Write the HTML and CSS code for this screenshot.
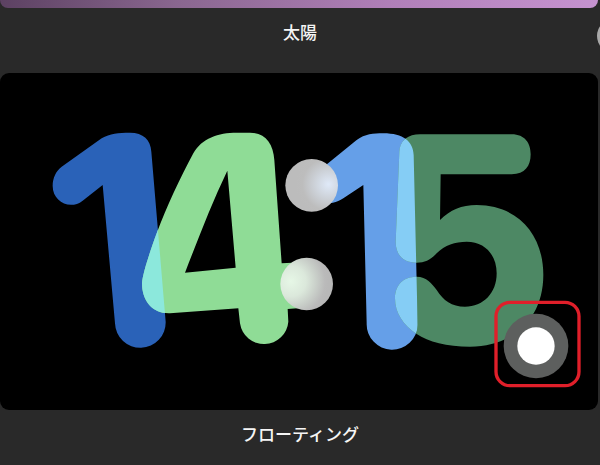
FILE: index.html
```html
<!DOCTYPE html>
<html lang="ja">
<head>
<meta charset="utf-8">
<title>フローティング</title>
<link rel="stylesheet" href="styles.css">
</head>
<body>
<div class="page">
  <div class="top-bar"></div>
  <div class="caption caption-top">太陽</div>
  <div class="side-dot"></div>
  <div class="card">
    <svg class="clock" viewBox="0 0 600 465" xmlns="http://www.w3.org/2000/svg">
      <defs>
        <path id="one-a" d="M95 170L215 85C240 70 265 68 300 68C340 68 362 90 364 125L407 635A76 76 0 0 1 255 640L218 225L158 272C120 302 68 275 68 228C68 203 78 183 95 170Z"/>
        <path id="four" fill-rule="evenodd" d="M620 68L660 68C705 68 730 100 733 150L755 460L850 455L860 590L773 597L775 635A73 73 0 0 1 630 640L625 595L420 610C365 612 336 570 336 520C338 490 360 425 380 370C410 290 450 205 490 130C515 85 565 68 620 68ZM592 182C545 280 505 385 465 488L617 473Z"/>
        <path id="one-b" d="M100 196L230 90C255 72 280 70 310 70C370 70 400 95 401 135L413 645A76 76 0 0 1 260 640L250 225L190 265C170 278 150 282 120 282Z"/>
        <path id="five" d="M420 73L695 73C735 73 752 100 752 133C752 168 735 193 695 193L482 193L480 330C510 300 545 285 590 285C710 285 790 370 790 495C790 625 700 710 570 710C500 710 445 695 410 672C370 645 345 610 345 565C345 525 370 500 410 500C440 500 455 520 470 540C490 572 515 590 555 590C610 590 650 550 650 490C650 435 615 395 560 395C525 395 495 405 470 430C450 450 435 458 410 458C370 458 347 435 347 395L358 125C360 90 385 73 420 73Z"/>
        <clipPath id="clip-one-a"><use href="#one-a"/></clipPath>
        <clipPath id="clip-one-b"><use href="#one-b"/></clipPath>
        <radialGradient id="dot-top" cx="0.82" cy="0.48" r="0.62">
          <stop offset="0" stop-color="#dfe9f8"/>
          <stop offset="0.35" stop-color="#d0d6de"/>
          <stop offset="0.8" stop-color="#bdbdbd"/>
          <stop offset="1" stop-color="#bcbcbc"/>
        </radialGradient>
        <radialGradient id="dot-bottom" cx="0.2" cy="0.45" r="0.72">
          <stop offset="0" stop-color="#e6f7e6"/>
          <stop offset="0.4" stop-color="#dbe8db"/>
          <stop offset="0.9" stop-color="#bababa"/>
          <stop offset="1" stop-color="#b8b8b8"/>
        </radialGradient>
      </defs>
      <g transform="translate(30 37) scale(0.33333)">
        <use href="#one-a" class="d-blue"/>
        <use href="#four" class="d-green" fill-rule="evenodd"/>
        <g clip-path="url(#clip-one-a)"><use href="#four" class="d-cyan"/></g>
      </g>
      <g transform="translate(280 37) scale(0.33333)">
        <use href="#one-b" class="d-sky"/>
        <use href="#five" class="d-forest"/>
        <g clip-path="url(#clip-one-b)"><use href="#five" class="d-pale"/></g>
        <circle cx="95" cy="226" r="79" fill="url(#dot-top)"/>
        <circle cx="80" cy="522" r="79" fill="url(#dot-bottom)"/>
        <circle cx="768" cy="708" r="97" class="knob-ring"/>
        <circle cx="768" cy="708" r="56" class="knob-core"/>
        <rect x="648" y="577" width="249" height="250" rx="42" class="marker"/>
      </g>
    </svg>
  </div>
  <div class="caption caption-bottom">フローティング</div>
</div>
</body>
</html>
```
FILE: styles.css
```css
html, body {
  margin: 0;
  padding: 0;
}
body {
  background: #292929;
  overflow: hidden;
}
.page {
  position: relative;
  width: 600px;
  height: 465px;
  overflow: hidden;
  display: flex;
  flex-direction: column;
  align-items: center;
  font-family: "Noto Sans CJK JP", "Noto Sans", sans-serif;
  color: #f5f5f5;
}
.top-bar {
  align-self: flex-start;
  width: 598px;
  height: 8px;
  flex: none;
  border-radius: 0 0 8px 8px;
  background: linear-gradient(90deg, #5c4162 0%, #8a6790 30%, #b07fb8 65%, #c693d0 100%);
}
.caption {
  font-size: 17px;
  font-weight: 500;
  line-height: 24px;
  text-align: center;
  flex: none;
}
.caption-top {
  margin-top: 12px;
  height: 53px;
}
.caption-bottom {
  margin-top: 12px;
}
.side-dot {
  position: absolute;
  left: 597px;
  top: 19px;
  width: 34px;
  height: 34px;
  border-radius: 50%;
  background: #a9a9a9;
}
.card {
  align-self: flex-start;
  width: 598px;
  height: 337px;
  flex: none;
  background: #000;
  border-radius: 9px;
  overflow: hidden;
}
.clock {
  display: block;
  width: 600px;
  height: 465px;
}
.d-blue { fill: #2a62b8; }
.d-green { fill: #8fdc96; }
.d-cyan { fill: #8ce8dc; }
.d-sky { fill: #659fe8; }
.d-forest { fill: #4d8864; }
.d-pale { fill: #85cdf5; }
.knob-ring { fill: #5d5f5e; }
.knob-core { fill: #fff; }
.marker {
  fill: none;
  stroke: #e01f2a;
  stroke-width: 10;
}
```
